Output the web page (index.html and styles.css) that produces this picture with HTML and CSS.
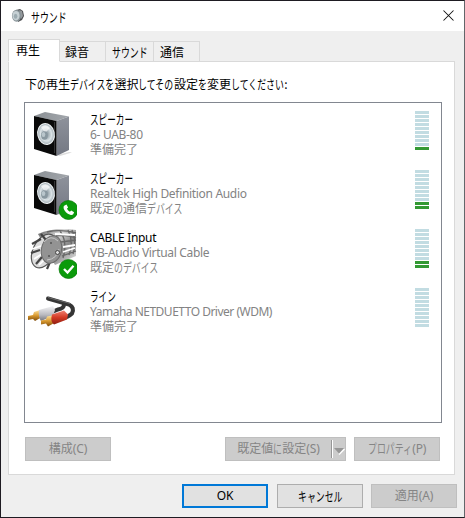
FILE: index.html
```html
<!DOCTYPE html>
<html lang="ja">
<head>
<meta charset="utf-8">
<title>サウンド</title>
<link rel="stylesheet" href="styles.css">
</head>
<body>
<svg width="0" height="0" class="defs" aria-hidden="true">
  <defs>
    <linearGradient id="top" x1="0" x2="1"><stop stop-color="#8b9095"/><stop offset="1" stop-color="#a2a6ab"/></linearGradient>
    <linearGradient id="side" x1="0" y1="0" x2="0" y2="1"><stop stop-color="#8e929b"/><stop offset="1" stop-color="#747883"/></linearGradient>
    <radialGradient id="cone"><stop stop-color="#8a989f"/><stop offset=".35" stop-color="#a7b3b9"/><stop offset=".7" stop-color="#dbe3e6"/><stop offset="1" stop-color="#aab5bb"/></radialGradient>
    <linearGradient id="gold" x1="0" y1="0" x2="0" y2="1"><stop stop-color="#ffe3a0"/><stop offset=".5" stop-color="#d99a30"/><stop offset="1" stop-color="#7e4a08"/></linearGradient>
    <linearGradient id="silver" x1="0" y1="0" x2="0" y2="1"><stop stop-color="#f4f4f6"/><stop offset=".6" stop-color="#b8b8be"/><stop offset="1" stop-color="#737379"/></linearGradient>
    <linearGradient id="red" x1="0" y1="0" x2="0" y2="1"><stop stop-color="#f08070"/><stop offset=".5" stop-color="#d33a25"/><stop offset="1" stop-color="#8c1d10"/></linearGradient>
    <linearGradient id="metal" x1="0" y1="0" x2="1" y2="1"><stop stop-color="#555"/><stop offset=".35" stop-color="#ddd"/><stop offset=".6" stop-color="#888"/><stop offset="1" stop-color="#eee"/></linearGradient>
    <symbol id="speaker" viewBox="0 0 50 50">
      <path d="M30 45l12-3 3 .5-12 3.500z" fill="#ddd"/>
      <path d="M7 6L18 2l24 4.500-12.500 4.500z" fill="url(#top)"/>
      <path d="M29.500 11L42 6.500V40l-12.500 6z" fill="url(#side)"/>
      <path d="M7 6l22.500 5v35L7 39z" fill="#090909"/>
      <path d="M27.500 12v31" stroke="#333"/>
      <ellipse cx="19" cy="24" rx="8.800" ry="11" transform="rotate(-12 19 24)" fill="#eef2f3"/>
      <ellipse cx="19" cy="24" rx="7.800" ry="10" transform="rotate(-12 19 24)" fill="url(#cone)"/>
      <path d="M14 17q5-4 9 1l-5 5z" fill="#fff" opacity=".65"/>
      <ellipse cx="17.500" cy="25.500" rx="3.400" ry="4.200" fill="#8998a0"/>
      <ellipse cx="16.500" cy="24.500" rx="1.800" ry="2.500" fill="#b9c6cc"/>
    </symbol>
  </defs>
</svg>
<main class="window">
  <header class="title">
    <svg class="app" width="14" height="16" viewBox="0 0 14 16">
      <path d="M5 2l4-1 3 2 1 5-2 4-4 2z" fill="#4c4e51"/>
      <path d="M8 2l3 1 1 5-2 3z" fill="#93989b"/>
      <ellipse cx="5.5" cy="7.7" rx="4.6" ry="6" fill="#899499"/>
      <ellipse cx="5" cy="7.7" rx="3.6" ry="4.8" fill="#c6d0d4"/>
      <ellipse cx="4.6" cy="8.2" rx="1.8" ry="2.5" fill="#9cabb1"/>
    </svg>
    <h1><span class="kana" style="--n:4">サウンド</span></h1>
    <svg class="close" width="11" height="11" viewBox="0 0 11 11"><path d="M.5.5l10 10M10.500.5l-10 10" stroke="#111" stroke-width="1.05"/></svg>
  </header>
  <nav class="tabs">
    <span class="tab on">再生</span><span class="tab t2">録音</span><span class="tab t3"><span class="kana" style="--n:4">サウンド</span></span><span class="tab t4">通信</span>
  </nav>
  <section class="panel">
    <p class="lead">下<span class="kana" style="--n:1">の</span>再生<span class="kana" style="--n:5">デバイスを</span>選択<span class="kana" style="--n:4">してその</span>設定<span class="kana" style="--n:1">を</span>変更<span class="kana" style="--n:6">してください</span>:</p>
    <ul class="list">
      <li>
        <svg class="icon" width="50" height="51"><use href="#speaker" width="50" height="50"/></svg>
        <div class="text"><b><span class="kana tight" style="--n:5">スピーカー</span></b><span class="en">6- UAB-80</span><span>準備完了</span></div>
        <div class="meter"><i></i><i></i><i></i><i></i><i></i><i></i><i></i><i></i><i></i><i class="lit"></i></div>
      </li>
      <li>
        <svg class="icon" width="50" height="51"><use href="#speaker" width="50" height="50"/>
          <circle cx="41.500" cy="41" r="9.500" fill="#0b9a0b" stroke="#087808" stroke-width=".7"/>
          <path transform="translate(1 0)" d="M36.500 36.500l2-.9 1.600 2.900-1.200 1.200q1.100 2 3 3l1.300-1.200 2.900 1.700-.9 2q-1 1.200-3 .6-5.300-1.700-6.600-6.600-.4-1.900.9-2.700z" fill="#fff"/></svg>
        <div class="text"><b><span class="kana tight" style="--n:5">スピーカー</span></b><span class="en">Realtek High Definition Audio</span><span>既定<span class="kana" style="--n:1">の</span>通信<span class="kana" style="--n:4">デバイス</span></span></div>
        <div class="meter"><i></i><i></i><i></i><i></i><i></i><i></i><i></i><i></i><i class="lit"></i><i class="lit"></i></div>
      </li>
      <li>
        <svg class="icon" width="50" height="51">
          <path d="M11 6Q27-1 49 2v26L28 37z" fill="url(#metal)"/>
          <path d="M20 4q14-3 29 1M29 8q10-2 20 2M34 14l15-2M35 28l14-5M33 3q8 11 3 27M41 2q6 12 1 25M45 2q5 12 1 24" fill="none" stroke="#666" stroke-width="1.300"/>
          <path d="M28 6l20 1M36 19l12-2M36 24l12-4" stroke="#fff" stroke-width="1.800"/>
          <ellipse cx="17" cy="23" rx="11" ry="18" transform="rotate(26 17 23)" fill="#dcdcdc" stroke="#555" stroke-width="1.200"/>
          <path d="M5 16l9-5M4 25l9-3M9 36l6-7M14 6l5 6M20 41l3-7" stroke="#444" stroke-width="2.200"/>
          <path d="M5 21l9-3M7 31l8-5M12 37l6-6" stroke="#fff" stroke-width="1.700"/>
          <ellipse cx="24.500" cy="21.500" rx="10" ry="14" transform="rotate(13 24.500 21.500)" fill="#939393" stroke="#6a6a6a"/>
          <path d="M17 14q7-8 14-1M20 32q10-1 12-11" fill="none" stroke="#c8c8c8"/>
          <circle cx="30.500" cy="24.500" r="2" fill="#ddd" stroke="#444"/><circle cx="24" cy="15" r="1" fill="#555"/><circle cx="22" cy="28" r="1" fill="#555"/>
          <circle cx="41.500" cy="41" r="9.500" fill="#0b9a0b" stroke="#087808" stroke-width=".7"/>
          <path d="M37 41l3.500 3.500 6-6.800" fill="none" stroke="#fff" stroke-width="2.300"/>
        </svg>
        <div class="text"><b class="en">CABLE Input</b><span class="en">VB-Audio Virtual Cable</span><span>既定<span class="kana" style="--n:5">のデバイス</span></span></div>
        <div class="meter"><i></i><i></i><i></i><i></i><i></i><i></i><i></i><i></i><i class="lit"></i><i class="lit"></i></div>
      </li>
      <li>
        <svg class="icon" width="50" height="51"><g transform="translate(0 2.500)">
          <path d="M21 9L42 15Q48 18 45 24Q41 28 33 29M37 15Q37 19 31 20L24 23" fill="none" stroke="#353535" stroke-width="4" stroke-linecap="round"/>
          <path d="M21 8L43 14" stroke="#686868"/>
          <path d="M1 26.500l5-1 1-3 6-2 2 7-7 4-2-2-5 1z" fill="url(#gold)"/>
          <path d="M12 20.500l14-4 2 4-2 6-12 5q-3-4-2-11z" fill="url(#silver)"/>
          <path d="M14 31l5-1 1-3 5-1 3 7-7 4-2-3-5 1z" fill="url(#gold)"/>
          <path d="M25 25l12-4 4 4-1 5-13 5q-4-3-2-10z" fill="url(#red)"/></g>
        </svg>
        <div class="text"><b><span class="kana tight" style="--n:3">ライン</span></b><span class="en long">Yamaha NETDUETTO Driver (WDM)</span><span>準備完了</span></div>
        <div class="meter"><i></i><i></i><i></i><i></i><i></i><i></i><i></i><i></i><i></i><i></i></div>
      </li>
    </ul>
    <div class="actions">
      <button disabled>構成<span class="key">(C)</span></button>
      <button class="split" disabled><span class="label">既定値<span class="kana" style="--n:1">に</span>設定<span class="key">(S)</span></span><svg width="14" height="18" viewBox="0 0 14 18"><path d="M.5 0v18" stroke="#969696"/><path d="M1.500 0v18" stroke="#fff"/><path d="M8 14.500l5.500-5.500" stroke="#fff" stroke-width="1.500"/><path d="M3 8h10l-5 5.500z" fill="#969696"/></svg></button>
      <button disabled><span class="kana" style="--n:5">プロパティ</span><span class="key">(P)</span></button>
    </div>
  </section>
  <footer class="footer">
    <button class="ok"><span class="key">OK</span></button>
    <button><span class="kana" style="--n:5">キャンセル</span></button>
    <button disabled>適用<span class="key">(A)</span></button>
  </footer>
</main>
</body>
</html>
```
FILE: styles.css
```css
* { box-sizing: border-box; }
body { margin: 0; font: 12px/15px "Noto Sans CJK JP", sans-serif; color: #000; }
.defs { display: block; height: 0; }
.window { width: 465px; height: 518px; border: 1px solid #1e1b22; border-right-color: #62666a; background: #efefef; overflow: hidden; }
.title { display: flex; align-items: center; height: 30px; background: #fff; padding: 0 10px 0 10px; }
.title h1 { margin: 0 auto 0 6px; font-size: 12px; font-weight: 400; line-height: 15px; }
.title .close { margin-bottom: 2px; }
.title .app { margin-bottom: 1px; }
.kana { --w: 8.9px; display: inline-block; width: calc(var(--n) * var(--w)); font-size: 13px; line-height: 13px; transform: scaleX(.685); transform-origin: 0 50%; white-space: nowrap; }
.kana.tight { --w: 8.6px; transform: scaleX(.662); }
.tabs { display: flex; align-items: flex-end; height: 31px; padding-left: 7px; position: relative; z-index: 1; }
.tab { height: 21px; border: 1px solid #d9d9d9; border-left: 0; padding: 2px 0 0 6px; width: 46px; white-space: nowrap; }
.tab.on { height: 23px; width: 52px; border-left: 1px solid #d9d9d9; border-bottom-color: #fff; background: #fff; padding: 2px 0 0 7px; }
.tab.t2 { padding-left: 5px; }
.tab.t3 { width: 48px; }
.panel { width: 447px; height: 414px; margin: -1px 0 0 7px; border: 1px solid #d9d9d9; background: #fff; padding: 14px 12px 12px 15px; }
.lead { margin: 0 0 0 1px; height: 26px; white-space: nowrap; }
.list { list-style: none; margin: 0; padding: 0 12px 0 2px; width: 418px; height: 321px; border: 1px solid #828790; }
.list li { display: flex; height: 59px; }
.icon { flex: none; margin-top: 7px; }
.text { display: flex; flex-direction: column; padding-top: 9px; margin-left: 13px; color: #838383; white-space: nowrap; }
.text b { font-weight: 400; color: #000; }
.text > * { height: 15px; line-height: 14px; }
.text > .en { font-family: "Noto Sans", sans-serif; letter-spacing: -.32px; line-height: 16px; }
.text > .long { letter-spacing: -.5px; }
.key { font-family: "Noto Sans", sans-serif; letter-spacing: -.1px; }
.meter { display: flex; flex-direction: column; gap: 1px; width: 14px; margin: 8px 0 0 auto; }
.meter i { height: 3px; background: #c2dce2; }
.meter .lit { background: #339933; }
.actions { display: flex; width: 415px; margin: 14px 0 0 1px; }
button { font: inherit; color: #000; width: 86px; height: 24px; padding: 0 0 2px; border: 1px solid #adadad; background: #e1e1e1; white-space: nowrap; }
button:disabled { color: #858585; background: #ccc; border-color: #bfbfbf; }
.split { display: flex; align-items: center; width: 121px; margin: 0 8px 0 auto; padding: 0; }
.split .label { width: 105px; text-align: center; padding-bottom: 2px; }
.footer { display: flex; justify-content: flex-end; gap: 8px; padding: 9px 7px 0 0; }
.footer .ok { border: 2px solid #0078d7; margin-right: 1px; }
```
